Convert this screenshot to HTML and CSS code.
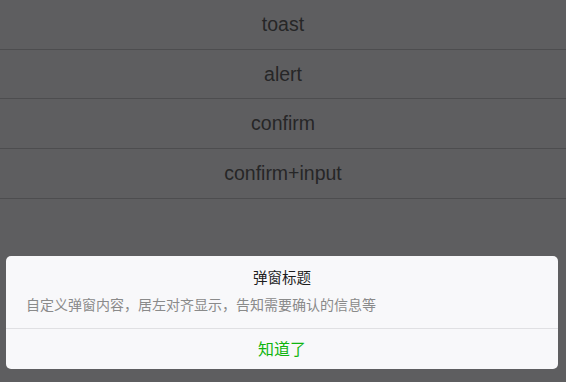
FILE: index.html
```html
<!DOCTYPE html>
<html lang="zh-CN">
<head>
<meta charset="utf-8">
<title>Dialog</title>
<link rel="stylesheet" href="styles.css">
</head>
<body>
<div class="page">
  <ul class="menu">
    <li class="menu-item">toast</li>
    <li class="menu-item">alert</li>
    <li class="menu-item">confirm</li>
    <li class="menu-item">confirm+input</li>
  </ul>
</div>
<div class="dialog">
  <div class="dialog-title">弹窗标题</div>
  <div class="dialog-content">自定义弹窗内容，居左对齐显示，告知需要确认的信息等</div>
  <div class="dialog-footer">
    <span class="dialog-btn">知道了</span>
  </div>
</div>
</body>
</html>
```

FILE: styles.css
```css
html, body {
  margin: 0;
  padding: 0;
  height: 100%;
}
body {
  background: #5e5e60;
  font-family: "Liberation Sans", Arial, "Noto Sans CJK SC", sans-serif;
  overflow: hidden;
}
.page {
  position: relative;
  height: 100%;
}
.menu {
  list-style: none;
  margin: 0;
  padding: 0;
}
.menu-item {
  height: 48.7px;
  line-height: 48.7px;
  text-align: center;
  font-size: 19.5px;
  color: #262627;
  border-bottom: 1px solid #4d4d4f;
}
.dialog {
  position: absolute;
  left: 6px;
  right: 8px;
  bottom: 13px;
  background: #f8f8fa;
  border-radius: 5px;
  font-family: "Noto Sans CJK SC", "Liberation Sans", sans-serif;
}
.dialog-title {
  padding-top: 11px;
  line-height: 20px;
  font-size: 14.5px;
  color: #1e1e1e;
  text-align: center;
}
.dialog-content {
  margin-top: 7px;
  padding: 0 20px 14px;
  line-height: 20px;
  font-size: 14px;
  color: #8a8a8a;
}
.dialog-footer {
  border-top: 1px solid #e0e0e3;
  height: 40px;
  display: flex;
  align-items: center;
  justify-content: center;
}
.dialog-btn {
  font-size: 16px;
  color: #10b510;
  margin-top: -3px;
}
```
